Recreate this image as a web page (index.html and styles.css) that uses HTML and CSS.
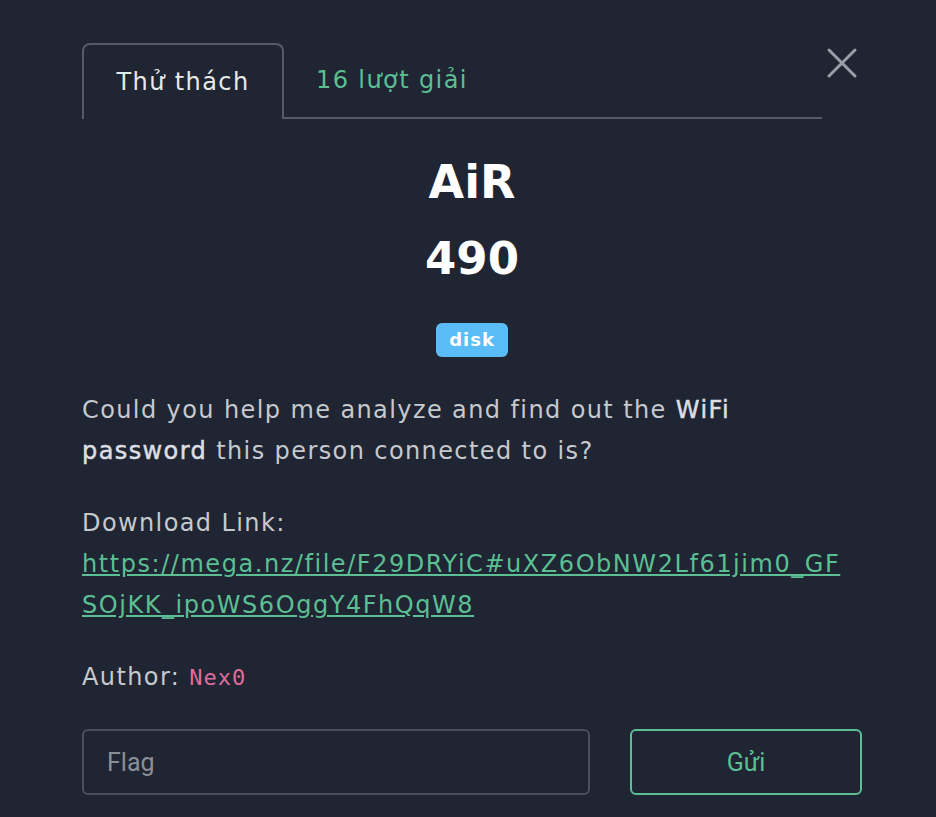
FILE: index.html
```html
<!DOCTYPE html>
<html lang="vi">
<head>
<meta charset="utf-8">
<title>AiR</title>
<link rel="stylesheet" href="styles.css">
</head>
<body>
<div class="modal">
  <div class="header">
    <nav class="tabs">
      <a class="tab active">Thử thách</a>
      <a class="tab solves">16 lượt giải</a>
    </nav>
    <button class="close" aria-label="Close">
      <svg width="32" height="32" viewBox="0 0 32 32"><path d="M3 3 L29 29 M29 3 L3 29" stroke="#9a9ea6" stroke-width="3" stroke-linecap="round"/></svg>
    </button>
  </div>
  <h2 class="name">AiR</h2>
  <h3 class="value">490</h3>
  <div class="tags"><span class="badge">disk</span></div>
  <div class="desc">
    <p>Could you help me analyze and find out the <strong>WiFi password</strong> this person connected to is?</p>
    <p>Download Link:<br><a class="link" href="#">https://mega.nz/file/F29DRYiC#uXZ6ObNW2Lf61jim0_GFSOjKK_ipoWS6OggY4FhQqW8</a></p>
    <p>Author: <code class="author">Nex0</code></p>
  </div>
  <form class="submit">
    <input class="flag" type="text" placeholder="Flag">
    <button class="send" type="button">Gửi</button>
  </form>
</div>
</body>
</html>
```
FILE: styles.css
```css
html, body {
  margin: 0;
  padding: 0;
  background: #1f2532;
}
body {
  font-family: "DejaVu Sans", sans-serif;
  color: #c6c9ce;
}
.modal {
  padding: 43px 74px 0 82px;
}
.header {
  display: flex;
  align-items: flex-start;
}
.tabs {
  flex: 1;
  display: flex;
  border-bottom: 2px solid #565c67;
  height: 74px;
}
.tab {
  display: flex;
  align-items: center;
  font-size: 24px;
  letter-spacing: 1.4px;
  padding: 0 32px;
  text-decoration: none;
}
.tab.active {
  color: #e8e9eb;
  border: 2px solid #565c67;
  border-bottom: none;
  border-radius: 8px 8px 0 0;
  width: 202px;
  box-sizing: border-box;
  justify-content: center;
  padding: 0;
  margin-bottom: -2px;
  height: 76px;
  background: #1f2532;
}
.tab.solves {
  color: #5cbf94;
}
.close {
  width: 40px;
  height: 40px;
  margin-top: 0;
  padding: 0;
  background: none;
  border: none;
  display: flex;
  align-items: center;
  justify-content: center;
}
.name {
  margin: 36px 0 0;
  text-align: center;
  color: #ffffff;
  font-size: 46px;
  font-weight: bold;
  line-height: 54px;
}
.value {
  margin: 24px 0 0;
  text-align: center;
  color: #ffffff;
  font-size: 45px;
  font-weight: bold;
  line-height: 52px;
}
.tags {
  margin-top: 38px;
  display: flex;
  justify-content: center;
}
.badge {
  background: #5bbdf7;
  color: #ffffff;
  font-weight: bold;
  font-size: 18px;
  letter-spacing: 1px;
  line-height: 34px;
  padding: 0 13px;
  border-radius: 6px;
}
.desc {
  margin-top: 33px;
  max-width: 772px;
  font-size: 24px;
  letter-spacing: 1.4px;
  line-height: 41px;
}
.desc p {
  margin: 0 0 31px;
}
.desc strong {
  font-weight: normal;
  color: #dcdee2;
  -webkit-text-stroke: 0.5px #dcdee2;
}
.link {
  color: #5cbf94;
  text-decoration: underline;
  word-break: break-all;
  letter-spacing: 1.55px;
}
.author {
  font-family: "DejaVu Sans Mono", monospace;
  color: #e06c9f;
  font-size: 22px;
  letter-spacing: 1px;
}
.submit {
  display: flex;
  gap: 40px;
  margin-top: 4px;
}
.flag {
  flex: 0 0 508px;
  height: 66px;
  box-sizing: border-box;
  background: #1f2532;
  border: 2px solid #4a505b;
  border-radius: 6px;
  padding: 0 23px;
  font-family: "Roboto", sans-serif;
  font-size: 25px;
  color: #c8cbd0;
  outline: none;
}
.flag::placeholder {
  color: #8a8f98;
}
.send {
  flex: 1;
  height: 66px;
  background: #1f2532;
  border: 2px solid #5cbf94;
  border-radius: 6px;
  color: #5cbf94;
  font-family: "Roboto", sans-serif;
  font-size: 25px;
}
```
